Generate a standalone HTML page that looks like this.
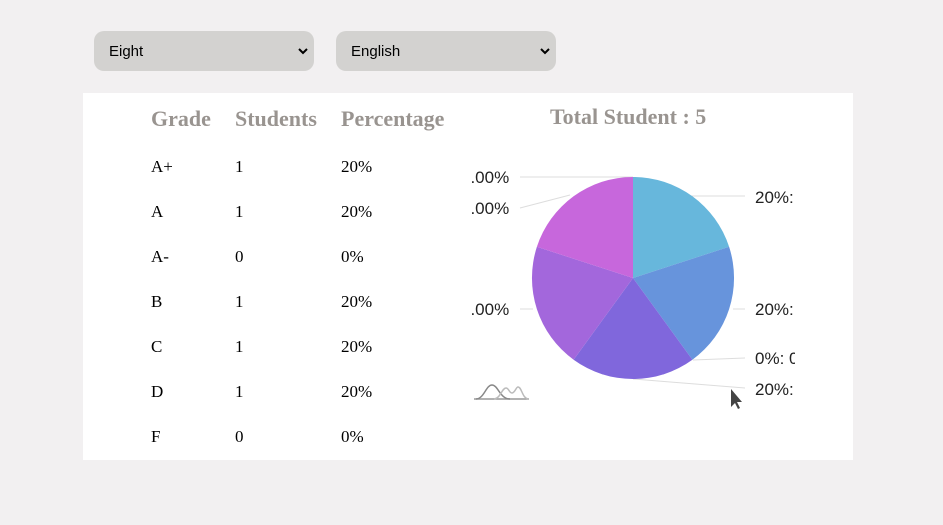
<!DOCTYPE html><html><head><style>
body{margin:0;width:943px;height:525px;background:#f2f0f1;position:relative;font-family:"Liberation Serif",serif;overflow:hidden}
.sel{position:absolute;top:31px;width:220px;height:40px;background:#d3d2d0;border-radius:10px;font:15px "Liberation Sans",sans-serif;color:#000}
.sel span{position:absolute;left:15px;top:12px}
.sel svg{position:absolute;right:6px;top:16px}
.panel{position:absolute;left:83px;top:93px;width:770px;height:367px;background:#fff}
.t{position:absolute;font-size:17px;color:#000}
.h{position:absolute;font-size:22px;font-weight:bold;color:#999490}
</style></head><body>
<div class="sel" style="left:94px"><span>Eight</span><svg width="10" height="8" viewBox="0 0 10 8"><path d="M1 2l4 4 4-4" stroke="#000" stroke-width="2" fill="none"/></svg></div>
<div class="sel" style="left:336px"><span>English</span><svg width="10" height="8" viewBox="0 0 10 8"><path d="M1 2l4 4 4-4" stroke="#000" stroke-width="2" fill="none"/></svg></div>
<div class="panel"></div>
<div class="h" style="left:151px;top:106px">Grade</div>
<div class="h" style="left:235px;top:106px">Students</div>
<div class="h" style="left:341px;top:106px">Percentage</div>
<div class="h" style="left:550px;top:104px">Total Student : 5</div>
<div class="t" style="left:151px;top:157px">A+</div><div class="t" style="left:235px;top:157px">1</div><div class="t" style="left:341px;top:157px">20%</div>
<div class="t" style="left:151px;top:202px">A</div><div class="t" style="left:235px;top:202px">1</div><div class="t" style="left:341px;top:202px">20%</div>
<div class="t" style="left:151px;top:247px">A-</div><div class="t" style="left:235px;top:247px">0</div><div class="t" style="left:341px;top:247px">0%</div>
<div class="t" style="left:151px;top:292px">B</div><div class="t" style="left:235px;top:292px">1</div><div class="t" style="left:341px;top:292px">20%</div>
<div class="t" style="left:151px;top:337px">C</div><div class="t" style="left:235px;top:337px">1</div><div class="t" style="left:341px;top:337px">20%</div>
<div class="t" style="left:151px;top:382px">D</div><div class="t" style="left:235px;top:382px">1</div><div class="t" style="left:341px;top:382px">20%</div>
<div class="t" style="left:151px;top:427px">F</div><div class="t" style="left:235px;top:427px">0</div><div class="t" style="left:341px;top:427px">0%</div>
<svg style="position:absolute;left:0;top:0" width="943" height="525">
<defs><clipPath id="c"><rect x="470" y="150" width="325" height="270"/></clipPath></defs>
<g clip-path="url(#c)" font-family="Liberation Sans,sans-serif" font-size="17" fill="#222">
<g stroke="#ddd" stroke-width="1" fill="none">
<path d="M520 177H633"/><path d="M520 208L570 195"/><path d="M520 309H533"/>
<path d="M690 196H745"/><path d="M733 309H745"/><path d="M693 360L745 358"/><path d="M633 379L745 388"/>
</g>
<path d="M633 278V177A101 101 0 0 1 729.1 246.8Z" fill="#67b7dc"/>
<path d="M633 278L729.1 246.8A101 101 0 0 1 692.4 359.7Z" fill="#6794dc"/>
<path d="M633 278L692.4 359.7A101 101 0 0 1 573.6 359.7Z" fill="#8067dc"/>
<path d="M633 278L573.6 359.7A101 101 0 0 1 536.9 246.8Z" fill="#a367dc"/>
<path d="M633 278L536.9 246.8A101 101 0 0 1 633 177Z" fill="#c767dc"/>
<text x="461" y="183">0.00%</text><text x="461" y="214">0.00%</text><text x="461" y="315">0.00%</text>
<text x="755" y="203">20%: 1</text><text x="755" y="315">20%: 1</text><text x="755" y="364">0%: 0</text><text x="755" y="395">20%: 1</text>
<path d="M474 399h55" stroke="#999" stroke-width="1.5"/>
<path d="M476 399c8 0 10-14 16-14s8 14 18 14" stroke="#888" stroke-width="1.5" fill="none"/>
<path d="M494 399c6 0 8-11 12-11 3 0 3 5 6 5 3 0 4-6 6-6 4 0 4 12 11 12" stroke="#bbb" stroke-width="1.5" fill="none"/>
<path d="M731 389v18l4-4 3 6 2-1-3-6h5z" fill="#444"/>
</g></svg>
</body></html>
